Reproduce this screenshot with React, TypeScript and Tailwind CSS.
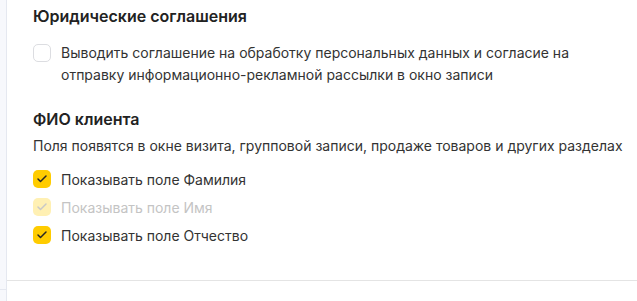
import { Check } from 'lucide-react';

function Box({ checked, disabled }: { checked?: boolean; disabled?: boolean }) {
  if (!checked) {
    return <span className="mt-[2px] h-[18px] w-[18px] shrink-0 rounded-[5px] border border-[#dcdde1] bg-white" />;
  }
  return (
    <span className={`flex h-[18px] w-[18px] shrink-0 items-center justify-center rounded-[5px] ${disabled ? 'bg-[#fff0b3]' : 'bg-[#ffcc00]'}`}>
      <Check size={12} strokeWidth={3} className={disabled ? 'text-[#c8c8c8]' : 'text-[#262626]'} />
    </span>
  );
}

function Row({ label, disabled }: { label: string; disabled?: boolean }) {
  return (
    <label className="flex h-[28px] items-center gap-[10px]">
      <Box checked disabled={disabled} />
      <span className={disabled ? 'text-[#c4c4c4]' : 'text-[#333]'}>{label}</span>
    </label>
  );
}

export default function App() {
  return (
    <div className="flex h-[301px] w-[637px] overflow-hidden bg-white text-[14px] text-[#333]" style={{ fontFamily: 'Inter, "Noto Sans", sans-serif' }}>
      <div className="flex w-[7px] shrink-0 flex-col border-r border-[#e5e8f0] bg-[#f7f8fc]">
        <div className="h-[290px] border-b border-[#e5e8f0]" />
      </div>
      <div className="flex flex-1 flex-col">
        <div className="h-[281px] border-b border-[#e4e4e4] px-[26px] pt-[4px]">
          <h2 className="text-[16px] leading-[24px] font-semibold text-[#222]">Юридические соглашения</h2>
          <label className="mt-[14px] flex gap-[10px] leading-[22px]">
            <Box />
            <span>
              Выводить соглашение на обработку персональных данных и согласие на
              <br />
              отправку информационно-рекламной рассылки в окно записи
            </span>
          </label>
          <h2 className="mt-[21px] text-[16px] leading-[24px] font-semibold text-[#222]">ФИО клиента</h2>
          <p className="mt-[4px] whitespace-nowrap leading-[22px]">Поля появятся в окне визита, групповой записи, продаже товаров и других разделах</p>
          <div className="mt-[8px] flex flex-col">
            <Row label="Показывать поле Фамилия" />
            <Row label="Показывать поле Имя" disabled />
            <Row label="Показывать поле Отчество" />
          </div>
        </div>
      </div>
    </div>
  );
}
